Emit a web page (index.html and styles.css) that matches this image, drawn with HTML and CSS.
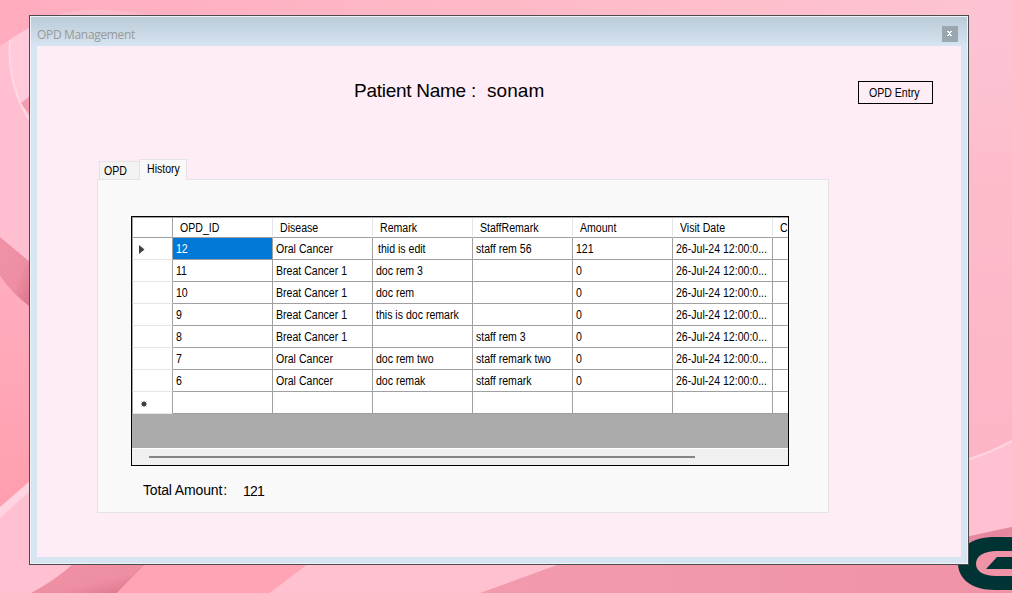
FILE: index.html
```html
<!DOCTYPE html>
<html lang="en">
<head>
<meta charset="utf-8">
<title>OPD Management</title>
<link rel="stylesheet" href="styles.css">
</head>
<body>
<svg class="wallpaper" viewBox="0 0 1012 593" aria-hidden="true">
  <defs>
    <linearGradient id="sky" x1="0" y1="0" x2="1" y2="0"><stop offset="0" stop-color="#ffacbf"/><stop offset=".5" stop-color="#feb9c7"/><stop offset="1" stop-color="#fdc4d2"/></linearGradient>
    <linearGradient id="side" x1="0" y1="0" x2="0" y2="1"><stop offset="0" stop-color="#fcc4d3"/><stop offset=".22" stop-color="#fcc1d0"/><stop offset=".35" stop-color="#fdbccb"/><stop offset="1" stop-color="#fdb5c6"/></linearGradient>
    <linearGradient id="band" x1="0" y1="0" x2="1" y2="1"><stop offset="0" stop-color="#f091a5"/><stop offset=".6" stop-color="#ee8ea2"/><stop offset="1" stop-color="#d97389"/></linearGradient>
    <linearGradient id="rose" x1="0" y1="0" x2="0" y2="1"><stop offset="0" stop-color="#ffadbe"/><stop offset="1" stop-color="#ff9eae"/></linearGradient>
    <linearGradient id="floor" x1="0" y1="0" x2="1" y2="0"><stop offset="0" stop-color="#f29bad"/><stop offset="1" stop-color="#f093a7"/></linearGradient>
  </defs>
  <rect width="1012" height="593" fill="#ffc1d1"/>
  <rect width="1012" height="20" fill="url(#sky)"/>
  <path d="M0 0H40V22L0 46Z" fill="#ffacbf"/>
  <path d="M0 46L29 28V262L0 237Z" fill="#ffbfd0"/>
  <path d="M50 16Q95 3 146 15V20H50Z" fill="#ffb9c8"/>
  <path d="M9 40L32 26V126C15 102 7 72 9 40Z" fill="#ffcbdc"/>
  <path d="M10 40C8 72 14 98 31 122" fill="none" stroke="#ffd7e2" stroke-width="2"/>
  <path d="M30 96L21 103L30 116Z" fill="#f59caf"/>
  <path d="M0 237L30 262V307Q12 294 0 276Z" fill="url(#band)"/>
  <path d="M0 276Q12 294 30 307V482L0 508Z" fill="url(#rose)"/>
  <path d="M0 507L30 481V491L0 518Z" fill="#ffd3e1"/>
  <path d="M73 564H146L117 593H31Q54 581 73 564Z" fill="url(#band)"/>
  <path d="M146 564H308L270 593H117Z" fill="#ffa4b5"/>
  <path d="M308 564H560L480 593H270Z" fill="#ffc1d0"/>
  <path d="M560 564H1012V593H480Z" fill="url(#floor)"/>
  <path d="M966 0H1012V441Q990 453 966 460Z" fill="url(#side)"/>
  <path d="M966 460Q990 453 1012 441V527L966 537Z" fill="#ffc1d1"/>
  <path d="M966 460Q990 453 1012 441" fill="none" stroke="#ffd4df" stroke-width="2"/>
  <path d="M966 537L1012 527V593H966Z" fill="#f193a7"/>
  <path d="M966 537L1012 527V535L966 544Z" fill="#e5879d"/>
  <path d="M1012 537H995C972 537 958 547 958 563C958 579 972 590 995 590H1012V576H996C983 576 976 571 976 564C976 556 984 551 997 551H1012Z" fill="#003334"/>
  <path d="M1012 557H997L986 569H1012Z" fill="#003334"/>
</svg>

<main class="window">
  <header class="titlebar">
    <span class="caption">OPD Management</span>
    <button class="close" aria-label="Close"><svg width="16" height="16" viewBox="0 0 16 16"><path d="M5 5h2v1h1v-1h2v1h-1v1h-1v1h1v1h1v1h-2v-1h-1v1h-2v-1h1v-1h1v-1h-1v-1h-1z" fill="#fff"/></svg></button>
  </header>
  <section class="client">
    <div class="patient">
      <div class="name"><span class="label">Patient Name :</span><span class="value">sonam</span></div>
      <button class="entry"><span class="narrow">OPD Entry</span></button>
    </div>
    <div class="tabs"><div class="tab"><span class="narrow">OPD</span></div><div class="tab active"><span class="narrow">History</span></div></div>
    <div class="page">
      <div class="grid">
        <div class="row head"><i></i><b><span>OPD_ID</span></b><b><span>Disease</span></b><b><span>Remark</span></b><b><span>StaffRemark</span></b><b><span>Amount</span></b><b><span>Visit Date</span></b><b><span>Cr</span></b></div>
        <div class="row"><i><svg width="6" height="10" viewBox="0 0 6 10"><path d="M0 0L5.5 4.5L0 9Z" fill="#404040"/></svg></i><b class="selected"><span>12</span></b><b><span>Oral Cancer</span></b><b class="indent"><span>thid is edit</span></b><b><span>staff rem 56</span></b><b><span>121</span></b><b><span>26-Jul-24 12:00:0...</span></b><b></b></div>
        <div class="row"><i></i><b><span>11</span></b><b><span>Breat Cancer 1</span></b><b><span>doc rem 3</span></b><b></b><b><span>0</span></b><b><span>26-Jul-24 12:00:0...</span></b><b></b></div>
        <div class="row"><i></i><b><span>10</span></b><b><span>Breat Cancer 1</span></b><b><span>doc rem</span></b><b></b><b><span>0</span></b><b><span>26-Jul-24 12:00:0...</span></b><b></b></div>
        <div class="row"><i></i><b><span>9</span></b><b><span>Breat Cancer 1</span></b><b><span>this is doc remark</span></b><b></b><b><span>0</span></b><b><span>26-Jul-24 12:00:0...</span></b><b></b></div>
        <div class="row"><i></i><b><span>8</span></b><b><span>Breat Cancer 1</span></b><b></b><b><span>staff rem 3</span></b><b><span>0</span></b><b><span>26-Jul-24 12:00:0...</span></b><b></b></div>
        <div class="row"><i></i><b><span>7</span></b><b><span>Oral Cancer</span></b><b><span>doc rem two</span></b><b><span>staff remark two</span></b><b><span>0</span></b><b><span>26-Jul-24 12:00:0...</span></b><b></b></div>
        <div class="row"><i></i><b><span>6</span></b><b><span>Oral Cancer</span></b><b><span>doc remak</span></b><b><span>staff remark</span></b><b><span>0</span></b><b><span>26-Jul-24 12:00:0...</span></b><b></b></div>
        <div class="row"><i class="new"><svg width="6" height="6" viewBox="0 0 6 6"><circle cx="3" cy="3" r="2.3" fill="#404040"/><path d="M3 0V6M0 3H6M.7 .7L5.3 5.3M5.3 .7L.7 5.3" stroke="#404040" stroke-width=".8"/></svg></i><b></b><b></b><b></b><b></b><b></b><b></b><b></b></div>
        <div class="empty"></div>
        <div class="scroll"><div class="thumb"></div></div>
      </div>
      <div class="total"><span class="total-label">Total Amount<span class="colon">:</span></span><span class="total-value">121</span></div>
    </div>
  </section>
</main>
</body>
</html>
```

FILE: styles.css
```css
* { box-sizing: border-box; }
body { margin: 0; width: 1012px; height: 593px; overflow: hidden; padding: 15px 0 0 29px; font: 12px/15px "Liberation Sans", Arial, sans-serif; color: #000; }
button { font: inherit; padding: 0; border: 0; margin: 0; color: inherit; }
.wallpaper { position: absolute; left: 0; top: 0; width: 1012px; height: 593px; z-index: -1; }
.window { width: 940px; height: 550px; border: 1px solid #4b4b4b; background: #d7e4f1; box-shadow: inset 0 0 0 1px #edf3f8; padding: 1px; }
.titlebar { height: 29px; display: flex; justify-content: space-between; align-items: flex-start; background: linear-gradient(#bacbd8, #d7e4f1); padding: 9px 9px 0 6px; }
.caption { font: 12px/18px "Open Sans", "Noto Sans", sans-serif; color: #999; letter-spacing: -.33px; }
.close { width: 16px; height: 16px; background: #9ba7b0; display: flex; }
.client { margin: 0 6px; height: 511px; background: #feecf6; padding-top: 35px; }
.patient { height: 78px; display: flex; justify-content: space-between; padding-left: 317px; padding-right: 28px; }
.name { font-size: 19px; line-height: 20px; white-space: nowrap; }
.label { letter-spacing: -.27px; }
.value { margin-left: 11px; letter-spacing: .1px; }
.entry { width: 75px; height: 23px; border: 1px solid #000; background: transparent; padding: 2px 0 0 10px; text-align: left; }
.narrow, .row span { display: inline-block; white-space: nowrap; transform: scaleX(.88); transform-origin: 0 0; }
.tabs { display: flex; height: 21px; align-items: flex-end; padding-left: 62px; margin-bottom: -1px; position: relative; }
.tab { width: 40px; height: 19px; background: #f3f3f3; border: 1px solid #e3e3e3; border-right: 0; padding: 2px 0 0 4px; }
.active { width: 48px; height: 21px; background: #f9f9f9; border-right: 1px solid #e3e3e3; border-bottom: 0; padding: 2px 0 0 7px; }
.page { width: 732px; height: 334px; margin-left: 60px; background: #f9f9f9; border: 1px solid #e3e3e3; padding: 36px 0 0 33px; }
.grid { width: 658px; height: 250px; border: 1px solid #000; background: #ababab; overflow: hidden; }
.row { display: grid; grid-template-columns: 41px repeat(6, 100px) 15px; width: 656px; height: 22px; background: #fff; }
.row i { border-left: 1px solid #a0a0a0; border-right: 1px solid #a0a0a0; border-bottom: 1px solid #e5e5e5; padding: 7px 0 0 6px; display: flex; }
.row b { font-weight: normal; border-right: 1px solid #a0a0a0; border-bottom: 1px solid #a0a0a0; padding: 4px 0 0 3px; white-space: nowrap; overflow: hidden; }
.row b:last-child { border-right: 0; }
.row .new { padding: 9px 0 0 8px; }
.head { height: 21px; border-top: 1px solid #a0a0a0; }
.head b { border-right-color: #e5e5e5; padding: 3px 0 0 7px; }
.head i { border-bottom-color: #a0a0a0; }
.row .selected { background: #0078d7; color: #fff; }
.row .indent { padding-left: 5px; }
.empty { height: 34px; }
.scroll { height: 17px; border-top: 1px solid #fff; background: #f0f0f0; padding: 7px 0 0 17px; }
.thumb { width: 546px; height: 2px; background: #858585; }
.total { display: flex; font-size: 14px; line-height: 16px; padding: 16px 0 0 12px; }
.total-label { width: 100px; letter-spacing: -.15px; }
.colon { margin-left: 1px; }
.total-value { padding-top: 1px; letter-spacing: -.75px; }
```
